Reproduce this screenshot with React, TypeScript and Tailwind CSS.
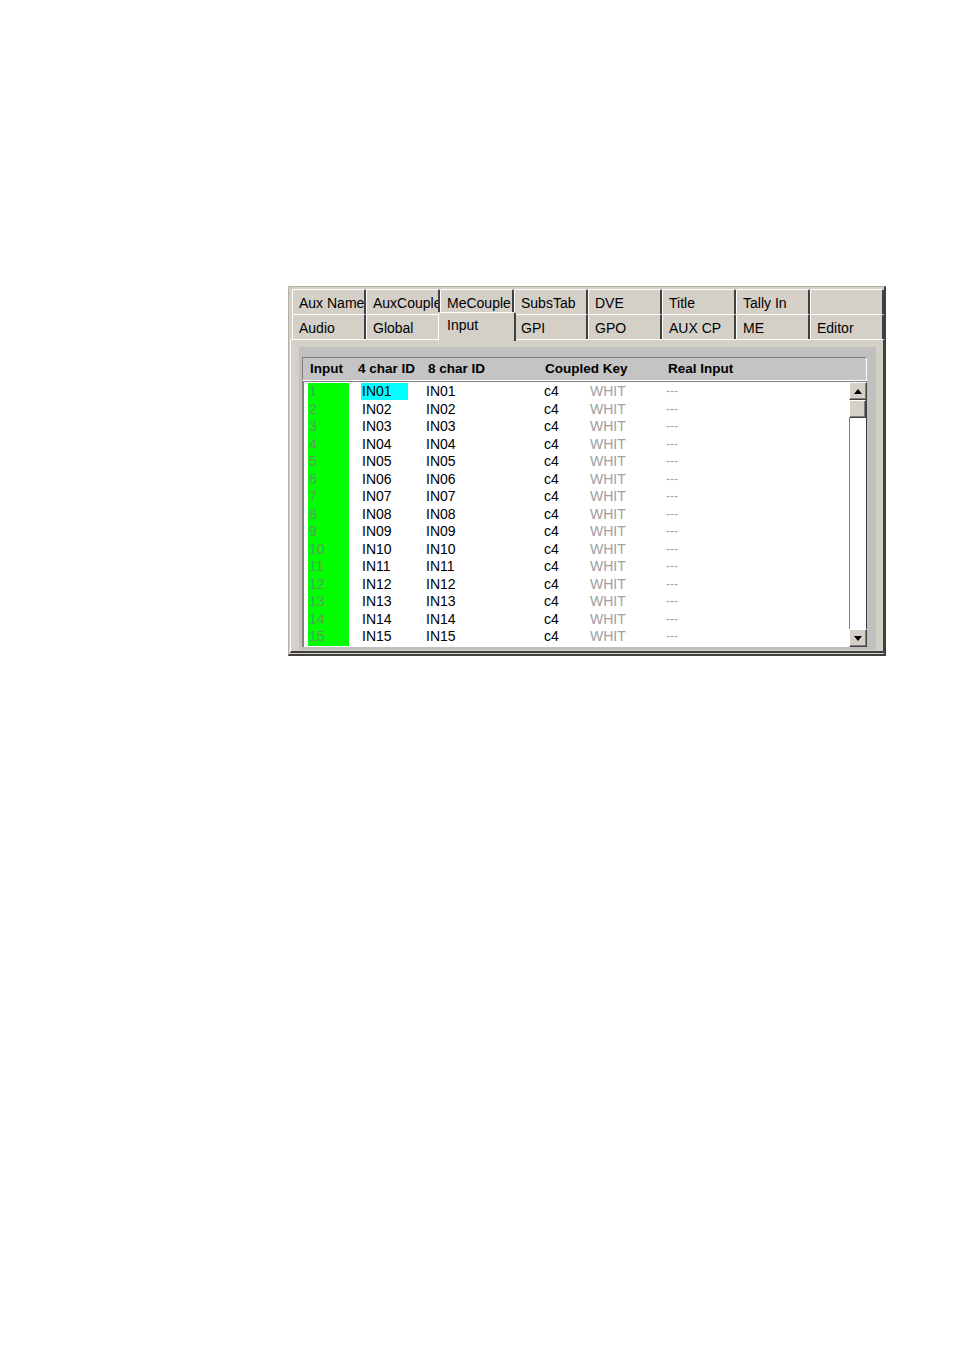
const tabRows = [
  ["Aux Name", "AuxCouple", "MeCouple", "SubsTab", "DVE", "Title", "Tally In", ""],
  ["Audio", "Global", "Input", "GPI", "GPO", "AUX CP", "ME", "Editor"],
];

const rows = Array.from({ length: 15 }, (_, i) => {
  const n = String(i + 1).padStart(2, "0");
  return { num: i + 1, id4: `IN${n}`, id8: `IN${n}`, key: "c4", src: "WHIT", real: "---" };
});

function Tab({ label, selected }: { label: string; selected?: boolean }) {
  if (selected) {
    return (
      <div className="relative z-10 -mx-[2px] -mt-[2px] h-[29px] w-[78px] shrink-0 rounded-t-[2px] border-l border-t border-white border-r-2 border-r-[#404040] bg-[#d4d0c8] pl-[8px] pt-[2px] leading-[20px]">
        {label}
      </div>
    );
  }
  return (
    <div className="h-[25px] w-[74px] shrink-0 overflow-hidden whitespace-nowrap rounded-t-[2px] border-l border-t border-white border-r-2 border-r-[#404040] bg-[#d4d0c8] pl-[6px] pt-[3px] leading-[20px]">
      {label}
    </div>
  );
}

function ArrowButton({ up }: { up?: boolean }) {
  return (
    <div className="flex h-[18px] w-[18px] items-center justify-center border-l border-t border-white border-r border-b border-r-[#404040] border-b-[#404040] bg-[#d4d0c8] shadow-[inset_-1px_-1px_0_#808080]">
      <svg width="8" height="5" viewBox="0 0 8 5">
        {up ? <path d="M0 5 L4 0 L8 5 Z" fill="#000" /> : <path d="M0 0 L8 0 L4 5 Z" fill="#000" />}
      </svg>
    </div>
  );
}

export default function App() {
  return (
    <div className="min-h-[1350px] w-[954px] bg-white pl-[288px] pt-[286px] font-['Liberation_Sans',Arial,sans-serif] text-[14px] text-black">
      <div className="h-[370px] w-[598px] border-l border-t border-[#b4b0a8] border-r-2 border-b-2 border-r-[#404040] border-b-[#404040] bg-[#d4d0c8]">
        {/* tab strip */}
        <div className="pl-[3px] pt-[2px]">
          {tabRows.map((row, r) => (
            <div key={r} className="flex h-[25px]">
              {row.map((t, i) => (
                <Tab key={i} label={t} selected={t === "Input"} />
              ))}
            </div>
          ))}
        </div>

        {/* page body */}
        <div className="ml-[1px] h-[314px] w-[595px] border-l border-t border-white border-r-2 border-b-2 border-r-[#404040] border-b-[#404040] pl-[8px] pr-[7px] pt-[7px]">
          <div className="h-[303px] bg-[#c0c0c0] pl-[3px] pr-[9px] pt-[10px]">
            {/* column headers */}
            <div className="flex h-[24px] items-center border-l border-t border-[#808080] border-r border-b border-r-white border-b-white bg-[#c4c4c4] text-[13.5px] font-bold">
              <div className="w-[55px] pl-[7px]">Input</div>
              <div className="w-[70px]">4 char ID</div>
              <div className="w-[117px]">8 char ID</div>
              <div className="w-[123px]">Coupled Key</div>
              <div>Real Input</div>
            </div>

            {/* list + scrollbar */}
            <div className="flex h-[266px] border-l-2 border-t border-l-[#808080] border-t-[#808080] bg-white">
              <div className="flex-1 pl-[4px] pt-[1px]">
                {rows.map((r) => (
                  <div key={r.num} className="flex h-[17.5px] items-center leading-[17px]">
                    <div className="h-[17.5px] w-[41px] bg-[#00ff00] pl-[1px] text-[#5f9a5f]">{r.num}</div>
                    <div className="ml-[12px] w-[47px]">
                      <span className={`block h-[17px] pl-[1px] ${r.num === 1 ? "bg-[#00ffff]" : ""}`}>{r.id4}</span>
                    </div>
                    <div className="w-[136px] pl-[18px]">{r.id8}</div>
                    <div className="w-[46px]">{r.key}</div>
                    <div className="w-[76px] text-[#a0a0a0]">{r.src}</div>
                    <div className="text-[12px] text-[#a0a0a0]">{r.real}</div>
                  </div>
                ))}
              </div>
              <div className="flex w-[18px] flex-col border-r border-r-[#404040]">
                <ArrowButton up />
                <div className="h-[18px] border-l border-t border-white border-r border-b border-r-[#404040] border-b-[#404040] bg-[#d4d0c8] shadow-[inset_-1px_-1px_0_#808080]" />
                <div className="flex-1 border-l border-[#808080] bg-white" />
                <ArrowButton />
              </div>
            </div>
          </div>
        </div>
      </div>
    </div>
  );
}
